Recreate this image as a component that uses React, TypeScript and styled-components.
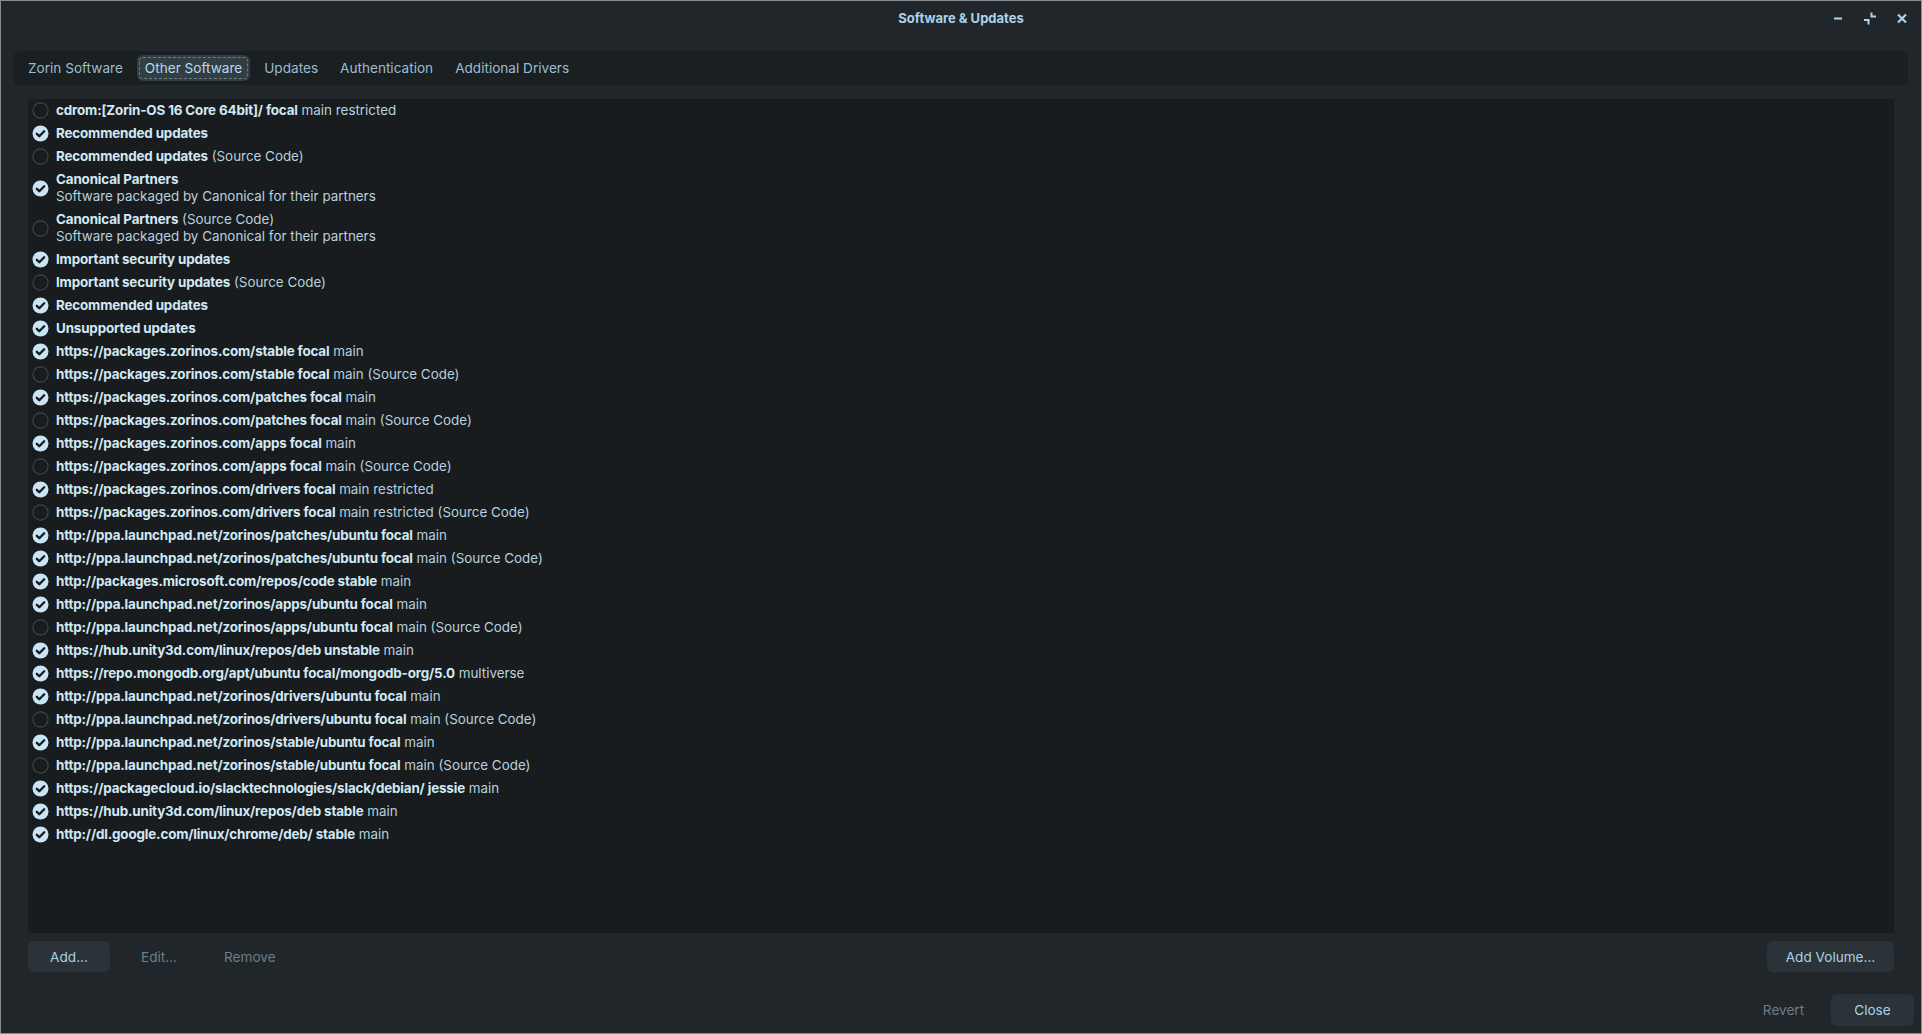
import React from "react";
import styled, { createGlobalStyle } from "styled-components";

const GlobalStyle = createGlobalStyle`
  html, body { margin: 0; padding: 0; background: #20262a; }
  body { font-family: Inter, "Noto Sans", "Liberation Sans", sans-serif; }
  * { box-sizing: border-box; }
`;

const Window = styled.div`
  width: 1922px;
  height: 1034px;
  border: 1px solid #858b90;
  background: #20262a;
  display: flex;
  flex-direction: column;
  color: #b9d3e1;
  font-size: 13.4px;
`;

const TitleBar = styled.div`
  height: 36px;
  flex: none;
  display: grid;
  grid-template-columns: 1fr auto 1fr;
  align-items: center;
`;

const Title = styled.div`
  grid-column: 2;
  font-weight: 700;
  font-size: 13px;
  color: #aad2e9;
  padding-bottom: 2px;
`;

const Controls = styled.div`
  grid-column: 3;
  justify-self: end;
  display: flex;
  align-items: center;
  gap: 14px;
  padding-right: 10px;
  padding-bottom: 2px;
`;

const CtlIcon = styled.svg`
  width: 18px;
  height: 18px;
  display: block;
`;

const Notebook = styled.div`
  flex: none;
  margin-top: 14px;
  padding: 0 13px;
`;

const TabBar = styled.div`
  height: 34px;
  background: #1a1f22;
  border-radius: 6px 6px 0 0;
  display: flex;
  align-items: center;
  gap: 6px;
  padding: 0 6px;
`;

const Tab = styled.div<{ $active?: boolean }>`
  position: relative;
  height: 26px;
  padding: 0 8px;
  display: flex;
  align-items: center;
  border-radius: 6px;
  font-size: 13.6px;
  color: ${(p) => (p.$active ? "#b6d8ea" : "#9dbdcf")};
  background: ${(p) => (p.$active ? "#323d44" : "transparent")};
  &::after {
    content: "";
    display: ${(p) => (p.$active ? "block" : "none")};
    position: absolute;
    inset: 2px;
    border: 1px dashed #6f7d86;
    border-radius: 4px;
  }
`;

const Page = styled.div`
  flex: none;
  display: flex;
  flex-direction: column;
  padding: 14px 27px 0 27px;
`;

const List = styled.div`
  height: 834px;
  background: #181c1f;
  display: flex;
  flex-direction: column;
`;

const Row = styled.div<{ $double?: boolean }>`
  height: ${(p) => (p.$double ? 40 : 23)}px;
  display: flex;
  align-items: center;
  padding-left: 4px;
  gap: 7px;
`;

const Texts = styled.div`
  display: flex;
  flex-direction: column;
  line-height: 17px;
`;

const Line = styled.div`
  white-space: pre;
  color: #b8d1de;
`;

const Strong = styled.span`
  font-weight: 700;
  color: #d2e8f4;
  letter-spacing: -0.15px;
`;

const ButtonRow = styled.div`
  margin-top: 8px;
  display: flex;
  align-items: center;
  gap: 8px;
`;

const Spacer = styled.div`
  flex: 1;
`;

const Button = styled.div<{ $flat?: boolean; $w?: number }>`
  height: 31px;
  min-width: ${(p) => p.$w ?? 82}px;
  padding: 0 16px;
  display: flex;
  align-items: center;
  justify-content: center;
  border-radius: 6px;
  background: ${(p) => (p.$flat ? "transparent" : "#2b3338")};
  color: ${(p) => (p.$flat ? "#6d7e88" : "#a9d2e8")};
  font-size: 13.6px;
`;

const ActionRow = styled.div`
  margin-top: 22px;
  display: flex;
  justify-content: flex-end;
  align-items: center;
  gap: 6px;
  padding-right: 7px;
`;

const ActionButton = styled(Button)`
  height: 32px;
  width: 83px;
`;

const Check = ({ on }: { on: boolean }) => (
  <svg width="17" height="17" viewBox="0 0 17 17" style={{ flex: "none" }}>
    {on ? (
      <>
        <circle cx="8.5" cy="8.5" r="8" fill="#c9e5f5" />
        <path
          d="M4.8 8.8 L7.3 11.2 L12.2 6.2"
          fill="none"
          stroke="#171b1e"
          strokeWidth="2.3"
          strokeLinecap="round"
          strokeLinejoin="round"
        />
      </>
    ) : (
      <circle cx="8.5" cy="8.5" r="7.6" fill="none" stroke="#3d4549" strokeWidth="1.2" />
    )}
  </svg>
);

type Item = { b: string; r?: string; sub?: string; on: boolean };

const items: Item[] = [
  { b: "cdrom:[Zorin-OS 16 Core 64bit]/ focal", r: "main restricted", on: false },
  { b: "Recommended updates", on: true },
  { b: "Recommended updates", r: "(Source Code)", on: false },
  { b: "Canonical Partners", sub: "Software packaged by Canonical for their partners", on: true },
  { b: "Canonical Partners", r: "(Source Code)", sub: "Software packaged by Canonical for their partners", on: false },
  { b: "Important security updates", on: true },
  { b: "Important security updates", r: "(Source Code)", on: false },
  { b: "Recommended updates", on: true },
  { b: "Unsupported updates", on: true },
  { b: "https://packages.zorinos.com/stable focal", r: "main", on: true },
  { b: "https://packages.zorinos.com/stable focal", r: "main (Source Code)", on: false },
  { b: "https://packages.zorinos.com/patches focal", r: "main", on: true },
  { b: "https://packages.zorinos.com/patches focal", r: "main (Source Code)", on: false },
  { b: "https://packages.zorinos.com/apps focal", r: "main", on: true },
  { b: "https://packages.zorinos.com/apps focal", r: "main (Source Code)", on: false },
  { b: "https://packages.zorinos.com/drivers focal", r: "main restricted", on: true },
  { b: "https://packages.zorinos.com/drivers focal", r: "main restricted (Source Code)", on: false },
  { b: "http://ppa.launchpad.net/zorinos/patches/ubuntu focal", r: "main", on: true },
  { b: "http://ppa.launchpad.net/zorinos/patches/ubuntu focal", r: "main (Source Code)", on: true },
  { b: "http://packages.microsoft.com/repos/code stable", r: "main", on: true },
  { b: "http://ppa.launchpad.net/zorinos/apps/ubuntu focal", r: "main", on: true },
  { b: "http://ppa.launchpad.net/zorinos/apps/ubuntu focal", r: "main (Source Code)", on: false },
  { b: "https://hub.unity3d.com/linux/repos/deb unstable", r: "main", on: true },
  { b: "https://repo.mongodb.org/apt/ubuntu focal/mongodb-org/5.0", r: "multiverse", on: true },
  { b: "http://ppa.launchpad.net/zorinos/drivers/ubuntu focal", r: "main", on: true },
  { b: "http://ppa.launchpad.net/zorinos/drivers/ubuntu focal", r: "main (Source Code)", on: false },
  { b: "http://ppa.launchpad.net/zorinos/stable/ubuntu focal", r: "main", on: true },
  { b: "http://ppa.launchpad.net/zorinos/stable/ubuntu focal", r: "main (Source Code)", on: false },
  { b: "https://packagecloud.io/slacktechnologies/slack/debian/ jessie", r: "main", on: true },
  { b: "https://hub.unity3d.com/linux/repos/deb stable", r: "main", on: true },
  { b: "http://dl.google.com/linux/chrome/deb/ stable", r: "main", on: true },
];

const tabs = ["Zorin Software", "Other Software", "Updates", "Authentication", "Additional Drivers"];

export default function App() {
  return (
    <>
      <GlobalStyle />
      <Window>
        <TitleBar>
          <Title>Software &amp; Updates</Title>
          <Controls>
            <CtlIcon viewBox="0 0 18 18">
              <path d="M5 9.5 H13" stroke="#a8d6ee" strokeWidth="2" />
            </CtlIcon>
            <CtlIcon viewBox="0 0 18 18">
              <path d="M10.5 3.5 V7.5 H15" fill="none" stroke="#a8d6ee" strokeWidth="2" />
              <path d="M3 11 H7.5 V15.5" fill="none" stroke="#a8d6ee" strokeWidth="2" />
            </CtlIcon>
            <CtlIcon viewBox="0 0 18 18">
              <path d="M5 5.5 L13 13.5 M13 5.5 L5 13.5" stroke="#a8d6ee" strokeWidth="2.2" />
            </CtlIcon>
          </Controls>
        </TitleBar>
        <Notebook>
          <TabBar>
            {tabs.map((t) => (
              <Tab key={t} $active={t === "Other Software"}>
                {t}
              </Tab>
            ))}
          </TabBar>
        </Notebook>
        <Page>
          <List>
            {items.map((it, i) => (
              <Row key={i} $double={!!it.sub}>
                <Check on={it.on} />
                <Texts>
                  <Line>
                    <Strong>{it.b}</Strong>
                    {it.r ? " " + it.r : ""}
                  </Line>
                  {it.sub && <Line>{it.sub}</Line>}
                </Texts>
              </Row>
            ))}
          </List>
          <ButtonRow>
            <Button>Add...</Button>
            <Button $flat>Edit...</Button>
            <Button $flat>Remove</Button>
            <Spacer />
            <Button $w={127}>Add Volume...</Button>
          </ButtonRow>
        </Page>
        <ActionRow>
          <ActionButton $flat>Revert</ActionButton>
          <ActionButton>Close</ActionButton>
        </ActionRow>
      </Window>
    </>
  );
}
